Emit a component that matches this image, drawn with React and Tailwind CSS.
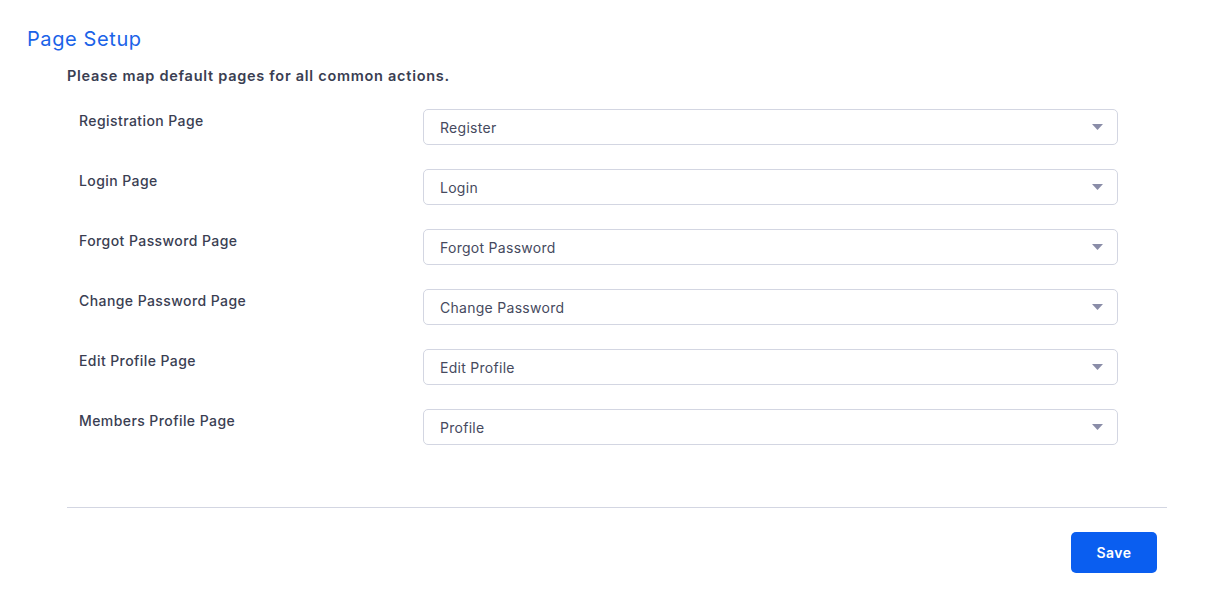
import React from 'react';

const rows = [
  ['Registration Page', 'Register'],
  ['Login Page', 'Login'],
  ['Forgot Password Page', 'Forgot Password'],
  ['Change Password Page', 'Change Password'],
  ['Edit Profile Page', 'Edit Profile'],
  ['Members Profile Page', 'Profile'],
];

export default function App() {
  return (
    <div className="min-h-screen bg-white font-['Inter','Noto_Sans',sans-serif] text-[#3a3e52]">
      <div className="pl-[27px] pt-[26px]">
        <h1 className="text-[20px] leading-[26px] tracking-[0.03em] text-[#1b63e8]">Page Setup</h1>
      </div>
      <div className="pl-[67px] pr-[62px]">
        <p className="mt-[14px] text-[14.5px] leading-[20px] font-semibold tracking-[0.05em] text-[#3a3e52]">
          Please map default pages for all common actions.
        </p>
        <div className="mt-[23px] pl-[12px] pr-[49px] flex flex-col gap-[24px]">
          {rows.map(([label, value]) => (
            <div key={label} className="flex items-start">
              <div className="w-[344px] pt-[2px] text-[14px] leading-[20px] font-medium tracking-[0.03em] text-[#3a3e52]">
                {label}
              </div>
              <div className="flex-1 h-[36px] border border-[#d3d6e2] rounded-[5px] flex items-center justify-between pl-[16px] pr-[14px]">
                <span className="text-[14px] tracking-[0.02em] text-[#464a5e]">{value}</span>
                <svg width="11" height="6" viewBox="0 0 11 6">
                  <path d="M0 0 L11 0 L5.5 6 Z" fill="#8a8da8" />
                </svg>
              </div>
            </div>
          ))}
        </div>
        <div className="mt-[62px] border-t border-[#d3d6e2]" />
        <div className="flex justify-end pr-[10px] mt-[24px]">
          <button className="w-[86px] h-[41px] rounded-[5px] bg-[#0a5ef0] text-white text-[14px] font-semibold tracking-[0.03em]">
            Save
          </button>
        </div>
      </div>
    </div>
  );
}
